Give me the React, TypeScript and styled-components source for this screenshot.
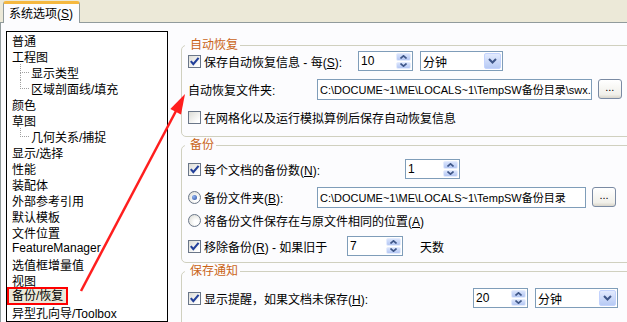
import React from 'react';
import styled, { createGlobalStyle, css } from 'styled-components';

const GlobalStyle = createGlobalStyle`
  html, body {
    margin: 0;
    padding: 0;
    overflow: hidden;
    background: #ECE9D8;
  }
  body {
    font-family: "Liberation Sans", "Noto Sans CJK SC", sans-serif;
    font-size: 12px;
    color: #000;
  }
`;

const Window = styled.div`
  position: relative;
  width: 627px;
  height: 322px;
  overflow: hidden;
  display: flex;
  flex-direction: column;
`;

const TabStrip = styled.div`
  display: flex;
  align-items: flex-end;
  height: 22px;
  padding-left: 3px;
`;

const Tab = styled.div`
  position: relative;
  z-index: 1;
  box-sizing: border-box;
  height: 22px;
  margin-bottom: -1px;
  padding: 1px 6px 0 5px;
  line-height: 18px;
  background: #FCFCFE;
  border: 1px solid #919B9C;
  border-top: 3px solid #F5B83F;
  border-bottom: none;
  border-radius: 3px 3px 0 0;
`;

const Panel = styled.div`
  flex: 1;
  display: flex;
  min-height: 0;
  padding: 8px 0 0 5px;
  background: #FCFCFE;
  border-top: 1px solid #919B9C;
  border-left: 1px solid #919B9C;
`;

const NavList = styled.div`
  flex: 0 0 162px;
  box-sizing: border-box;
  border: 1px solid #000;
  background: #fff;
`;

const NavItem = styled.div<{ $indent?: boolean; $branch?: 'mid' | 'last' }>`
  position: relative;
  display: flex;
  align-items: center;
  height: 16px;
  padding-left: ${p => (p.$indent ? 24 : 5)}px;
  white-space: nowrap;
  ${p => p.$branch && css`
    &::before {
      content: '';
      position: absolute;
      left: 13px;
      top: 0;
      width: 8px;
      height: 8px;
      border-left: 1px dotted #A0A0A0;
      border-bottom: 1px dotted #A0A0A0;
    }
  `}
  ${p => p.$branch === 'mid' && css`
    &::after {
      content: '';
      position: absolute;
      left: 13px;
      top: 8px;
      bottom: 0;
      border-left: 1px dotted #A0A0A0;
    }
  `}
`;

const SelectedText = styled.span`
  display: inline-block;
  line-height: 14px;
  padding: 0 3px;
  margin-left: -3px;
  background: #ECE9D8;
  outline: 2px solid #FF0000;
`;

const Content = styled.div`
  flex: 0 0 460px;
  margin-left: 13px;
`;

const Group = styled.fieldset<{ $mt: number; $pb: number }>`
  margin: ${p => p.$mt}px 0 0 0;
  padding: 0 0 ${p => p.$pb}px 6px;
  min-width: 0;
  border: 1px solid #D0D0BF;
  border-radius: 5px;
`;

const Legend = styled.legend`
  margin-left: -3px;
  padding: 0 2px 0 5px;
  line-height: 12px;
  color: #CA6418;
`;

const Row = styled.div<{ $h: number; $mt?: number }>`
  display: flex;
  align-items: center;
  height: ${p => p.$h}px;
  margin-top: ${p => p.$mt ?? 0}px;
  white-space: nowrap;
`;

const Label = styled.label<{ $w?: number }>`
  display: flex;
  align-items: center;
  gap: 3px;
  flex: 0 0 ${p => (p.$w ? `${p.$w}px` : 'auto')};
`;

const Key = styled.u`
  text-underline-offset: 1px;
`;

const Box = styled.span`
  display: inline-flex;
  align-items: center;
  justify-content: center;
  box-sizing: border-box;
  width: 13px;
  height: 13px;
  border: 1px solid #6A7688;
  background: linear-gradient(135deg, #DCDCD6, #FFFFFF 85%);
`;

const Circle = styled(Box)`
  border-radius: 50%;
  background: radial-gradient(circle at 65% 65%, #FFFFFF 20%, #DCDCD6 90%);
`;

const Dot = styled.span`
  width: 5px;
  height: 5px;
  border-radius: 50%;
  background: radial-gradient(circle at 35% 35%, #8FB2F0, #2B4F9F);
`;

const Field = styled.div<{ $w: number; $h?: number }>`
  display: flex;
  box-sizing: border-box;
  flex: 0 0 ${p => p.$w}px;
  height: ${p => p.$h ?? 20}px;
  border: 1px solid #7F9DB9;
  background: #fff;
`;

const FieldText = styled.span<{ $size?: number }>`
  flex: 1;
  min-width: 0;
  padding-left: 2px;
  align-self: center;
  font-size: ${p => p.$size ?? 12}px;
  overflow: hidden;
  white-space: nowrap;
`;

const SpinButtons = styled.div`
  display: flex;
  flex-direction: column;
  gap: 1px;
  width: 15px;
  padding: 1px 1px 1px 0;
`;

const SpinButton = styled.span`
  flex: 1;
  display: flex;
  align-items: center;
  justify-content: center;
  border-radius: 2px;
  border: 1px solid #E4ECFD;
  background: linear-gradient(#D8E3FC, #B4C7F3);
`;

const DropButton = styled.span`
  display: flex;
  align-items: center;
  justify-content: center;
  width: 15px;
  margin: 1px;
  border-radius: 2px;
  border: 1px solid #C3D3FD;
  background: linear-gradient(#E3EBFE, #B7CAF4);
`;

const BrowseButton = styled.button`
  box-sizing: border-box;
  width: 24px;
  height: 20px;
  margin-left: 6px;
  padding: 0 0 4px;
  font-family: inherit;
  font-size: 11px;
  line-height: 10px;
  border: 1px solid #7A8AA3;
  border-radius: 3px;
  background: linear-gradient(#FFFFFF, #F1F0EA 80%, #D9D5CB);
`;

const Gap = styled.span<{ $w: number }>`
  flex: 0 0 ${p => p.$w}px;
`;

const Overlay = styled.svg`
  position: absolute;
  top: 0;
  left: 0;
  pointer-events: none;
`;

const CheckBox = ({ checked }: { checked?: boolean }) => (
  <Box>
    {checked && (
      <svg width="11" height="11" viewBox="0 0 11 11">
        <path d="M1.8 5.2 L4.3 8.2 L9.6 1.8" stroke="#23409A" strokeWidth="2.1" fill="none" />
      </svg>
    )}
  </Box>
);

const Radio = ({ checked }: { checked?: boolean }) => <Circle>{checked && <Dot />}</Circle>;

const Chevron = ({ up }: { up?: boolean }) => (
  <svg width="7" height="4" viewBox="0 0 7 4">
    <path d={up ? 'M0.5 3.5 L3.5 0.8 L6.5 3.5' : 'M0.5 0.5 L3.5 3.2 L6.5 0.5'} stroke="#3E5688" strokeWidth="1.6" fill="none" />
  </svg>
);

const SpinBox = ({ value, w }: { value: string; w: number }) => (
  <Field $w={w}>
    <FieldText>{value}</FieldText>
    <SpinButtons>
      <SpinButton><Chevron up /></SpinButton>
      <SpinButton><Chevron /></SpinButton>
    </SpinButtons>
  </Field>
);

const Dropdown = ({ value }: { value: string }) => (
  <Field $w={83}>
    <FieldText>{value}</FieldText>
    <DropButton>
      <svg width="9" height="6" viewBox="0 0 9 6">
        <path d="M1 1 L4.5 4.5 L8 1" stroke="#3E5688" strokeWidth="2" fill="none" />
      </svg>
    </DropButton>
  </Field>
);

const PathField = ({ value }: { value: string }) => (
  <>
    <Field $w={269} $h={21}>
      <FieldText $size={11}>{value}</FieldText>
    </Field>
    <BrowseButton type="button">...</BrowseButton>
  </>
);

type NavEntry = { text: string; branch?: 'mid' | 'last'; selected?: boolean };

const navItems: NavEntry[] = [
  { text: '普通' },
  { text: '工程图' },
  { text: '显示类型', branch: 'mid' },
  { text: '区域剖面线/填充', branch: 'last' },
  { text: '颜色' },
  { text: '草图' },
  { text: '几何关系/捕捉', branch: 'last' },
  { text: '显示/选择' },
  { text: '性能' },
  { text: '装配体' },
  { text: '外部参考引用' },
  { text: '默认模板' },
  { text: '文件位置' },
  { text: 'FeatureManager' },
  { text: '选值框增量值' },
  { text: '视图' },
  { text: '备份/恢复', selected: true },
  { text: '异型孔向导/Toolbox' },
];

const tempPath = 'C:\\DOCUME~1\\ME\\LOCALS~1\\TempSW备份目录';

const App: React.FC = () => (
  <Window>
    <GlobalStyle />
    <TabStrip>
      <Tab>系统选项(<Key>S</Key>)</Tab>
    </TabStrip>
    <Panel>
      <NavList>
        {navItems.map(item => (
          <NavItem key={item.text} $indent={!!item.branch} $branch={item.branch}>
            {item.selected ? <SelectedText>{item.text}</SelectedText> : item.text}
          </NavItem>
        ))}
      </NavList>
      <Content>
        <Group $mt={8} $pb={11}>
          <Legend>自动恢复</Legend>
          <Row $h={20}>
            <Label $w={170}>
              <CheckBox checked />
              <span>保存自动恢复信息 - 每(<Key>S</Key>):</span>
            </Label>
            <SpinBox value="10" w={55} />
            <Gap $w={7} />
            <Dropdown value="分钟" />
          </Row>
          <Row $h={22} $mt={7}>
            <Label $w={129}>自动恢复文件夹:</Label>
            <PathField value={`${tempPath}\\swx.`} />
          </Row>
          <Row $h={16} $mt={9}>
            <Label>
              <CheckBox />
              <span>在网格化以及运行模拟算例后保存自动恢复信息</span>
            </Label>
          </Row>
        </Group>

        <Group $mt={2} $pb={6}>
          <Legend>备份</Legend>
          <Row $h={20} $mt={8}>
            <Label $w={217}>
              <CheckBox checked />
              <span>每个文档的备份数(<Key>N</Key>):</span>
            </Label>
            <SpinBox value="1" w={55} />
          </Row>
          <Row $h={22} $mt={7}>
            <Label $w={129}>
              <Radio checked />
              <span>备份文件夹(<Key>B</Key>):</span>
            </Label>
            <PathField value={tempPath} />
          </Row>
          <Row $h={16} $mt={4}>
            <Label>
              <Radio />
              <span>将备份文件保存在与原文件相同的位置(<Key>A</Key>)</span>
            </Label>
          </Row>
          <Row $h={20} $mt={8}>
            <Label $w={159}>
              <CheckBox checked />
              <span>移除备份(<Key>R</Key>) - 如果旧于</span>
            </Label>
            <SpinBox value="7" w={56} />
            <Gap $w={17} />
            <span>天数</span>
          </Row>
        </Group>

        <Group $mt={2} $pb={20}>
          <Legend>保存通知</Legend>
          <Row $h={22} $mt={10}>
            <Label $w={285}>
              <CheckBox checked />
              <span>显示提醒，如果文档未保存(<Key>H</Key>):</span>
            </Label>
            <SpinBox value="20" w={55} />
            <Gap $w={7} />
            <Dropdown value="分钟" />
          </Row>
        </Group>
      </Content>
    </Panel>

    <Overlay width="627" height="322" viewBox="0 0 627 322">
      <line x1="81" y1="291" x2="176" y2="111" stroke="#FF1E1E" strokeWidth="2.5" />
      <polygon points="185,94 181,114.5 170.3,108.9" fill="#FF1E1E" />
    </Overlay>
  </Window>
);

export default App;
